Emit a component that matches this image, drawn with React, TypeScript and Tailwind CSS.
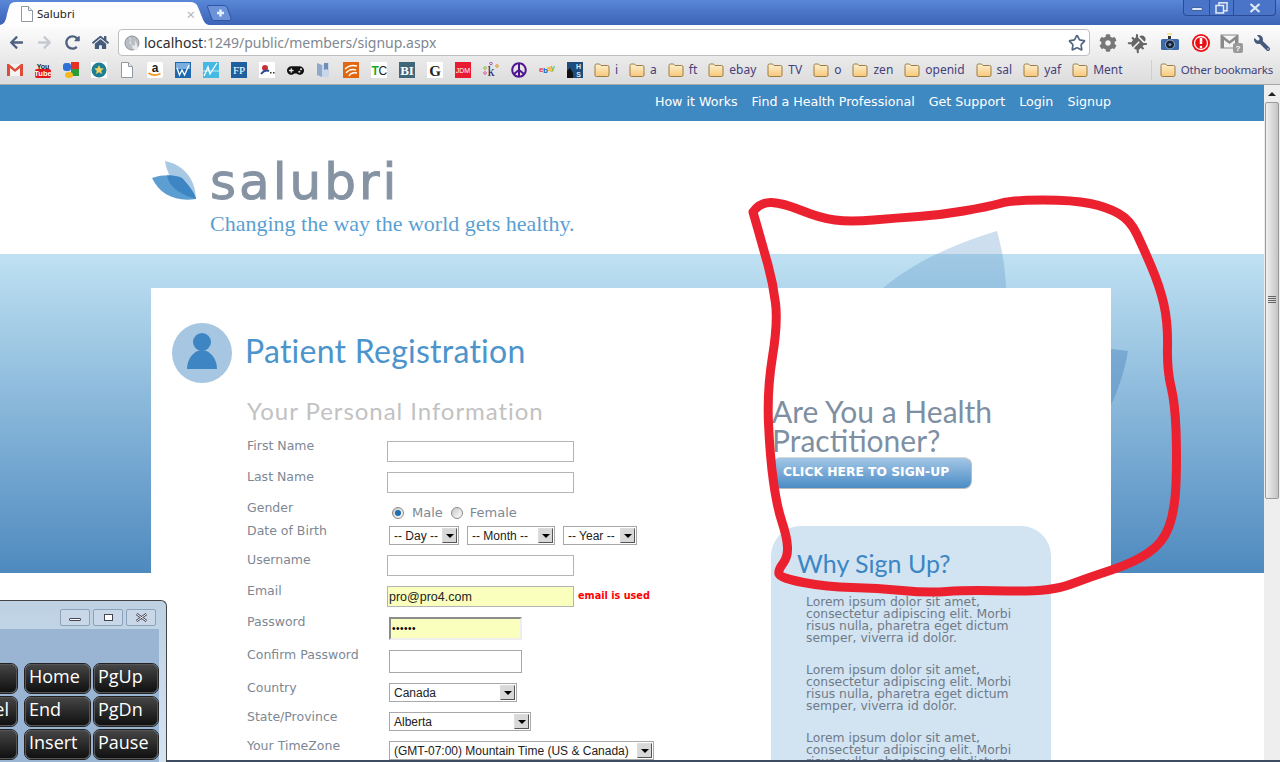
import React from "react";
import { Star } from "lucide-react";
import {
  FaArrowLeft,
  FaArrowRight,
  FaRedoAlt,
  FaHome,
  FaCog,
  FaBug,
  FaWrench,
  FaGamepad,
  FaPeace,
} from "react-icons/fa";

const sans = "font-['DejaVu_Sans',sans-serif]";
const heading = "font-['Lato',sans-serif]";
const ui = "font-['Liberation_Sans',sans-serif]";

function DocIcon() {
  return (
    <svg width="16" height="16" viewBox="0 0 16 16" className="shrink-0">
      <path d="M2.5 .5h7l4 4v11h-11z" fill="#fff" stroke="#8f98a3" />
      <path d="M9.5 .5v4h4" fill="#e8ecf0" stroke="#8f98a3" />
    </svg>
  );
}

function FolderIcon() {
  return (
    <svg width="16" height="16" viewBox="0 0 16 16" className="shrink-0">
      <defs>
        <linearGradient id="folderFill" x1="0" y1="0" x2="0" y2="1">
          <stop offset="0" stopColor="#fdf1cf" />
          <stop offset="1" stopColor="#f6c77a" />
        </linearGradient>
      </defs>
      <path
        d="M1 3.5Q1 2 2.5 2h3L7 3.5h6.5Q15 3.5 15 5v8q0 1.5-1.5 1.5h-11Q1 14.5 1 13z"
        fill="url(#folderFill)"
        stroke="#9b7d45"
      />
    </svg>
  );
}

const favicons: React.ReactNode[] = [
  <svg key="gmail" width="16" height="16" viewBox="0 0 16 16">
    <rect y="2" width="16" height="12" fill="#f4f4f4" />
    <path d="M0 2v12h3V6l5 4 5-4v8h3V2h-2L8 7 2 2z" fill="#dd4b39" />
  </svg>,
  <svg key="yt" width="16" height="16" viewBox="0 0 16 16">
    <text x="8" y="6.5" textAnchor="middle" fontSize="7" fontWeight="700" fontFamily="Liberation Sans" fill="#222">You</text>
    <rect y="7" width="16" height="9" rx="2" fill="#e3161b" />
    <text x="8" y="14" textAnchor="middle" fontSize="7.5" fontWeight="700" fontFamily="Liberation Sans" fill="#fff">Tube</text>
  </svg>,
  <svg key="google" width="16" height="16" viewBox="0 0 16 16">
    <rect x="8" width="8" height="7" fill="#e53125" />
    <rect y="1" width="8" height="8" rx="3" fill="#2f6fd8" />
    <rect x="8" y="7" width="8" height="7" fill="#2c9b3c" />
    <ellipse cx="6" cy="13" rx="4" ry="3" fill="#f5b818" />
  </svg>,
  <svg key="star" width="16" height="16" viewBox="0 0 16 16">
    <rect width="16" height="16" fill="#fff" />
    <circle cx="8" cy="8" r="7.5" fill="#1d7f95" />
    <path d="M8 3l1.4 3.2 3.4.3-2.6 2.2.8 3.3L8 10.3 5 12l.8-3.3-2.6-2.2 3.4-.3z" fill="#f4d65a" />
  </svg>,
  <DocIcon key="doc" />,
  <svg key="amazon" width="16" height="16" viewBox="0 0 16 16">
    <rect width="16" height="16" rx="2" fill="#fff" />
    <text x="8" y="9.5" textAnchor="middle" fontSize="12" fontWeight="700" fontFamily="Liberation Sans" fill="#222">a</text>
    <path d="M1.5 11q6 4 12 .5" fill="none" stroke="#f0971d" strokeWidth="1.6" />
  </svg>,
  <svg key="w1" width="16" height="16" viewBox="0 0 16 16">
    <rect width="16" height="16" fill="#1f68ad" />
    <rect x="1" y="1" width="14" height="6" fill="#79aede" />
    <path d="M2 6l2.5 7L7 8l2.5 5L14 3" fill="none" stroke="#fff" strokeWidth="1.3" />
  </svg>,
  <svg key="w2" width="16" height="16" viewBox="0 0 16 16">
    <rect width="16" height="16" fill="#45b9e2" />
    <path d="M0 9h16" stroke="#c9eefa" />
    <path d="M1 14L5 5l2 7 7-11" fill="none" stroke="#fff" strokeWidth="1.3" />
  </svg>,
  <svg key="fp" width="16" height="16" viewBox="0 0 16 16">
    <rect width="16" height="16" fill="#1d5f9f" />
    <text x="8" y="12" textAnchor="middle" fontSize="11" fontFamily="Liberation Serif" fill="#fff">FP</text>
  </svg>,
  <svg key="hurricane" width="16" height="16" viewBox="0 0 16 16">
    <rect width="16" height="16" fill="#fff" />
    <circle cx="6" cy="6" r="3" fill="#c8303a" />
    <path d="M2 12q4-5 8-3" fill="none" stroke="#2c4c8f" strokeWidth="2" />
    <rect x="11" y="10" width="1.5" height="1.5" fill="#333" />
    <rect x="14" y="10" width="1.5" height="1.5" fill="#333" />
  </svg>,
  <FaGamepad key="pad" size={17} color="#111" />,
  <svg key="sheet" width="16" height="16" viewBox="0 0 16 16">
    <path d="M2 1l5 2v12l-5-2z" fill="#8fa9cc" />
    <path d="M7 3l7-2v14l-7 0z" fill="#c8d6e8" />
    <path d="M9 1h4v7l-2-1-2 1z" fill="#6f8db8" />
  </svg>,
  <svg key="orange" width="16" height="16" viewBox="0 0 16 16">
    <rect width="16" height="16" fill="#e0660f" />
    <path d="M2 7q5-5 12-3M3 11q4-5 10-3M6 14q2-4 8-3" fill="none" stroke="#fff" strokeWidth="1.4" />
  </svg>,
  <svg key="tc" width="16" height="16" viewBox="0 0 16 16">
    <rect width="16" height="16" fill="#fff" />
    <text x="0.5" y="13" fontSize="12" fontWeight="700" fontFamily="Liberation Sans" fill="#12ab1c">T</text>
    <text x="7.5" y="13" fontSize="12" fontFamily="Liberation Sans" fill="#222">C</text>
  </svg>,
  <svg key="bi" width="16" height="16" viewBox="0 0 16 16">
    <rect width="16" height="16" fill="#3f6778" />
    <text x="8" y="13" textAnchor="middle" fontSize="13" fontWeight="700" fontFamily="Liberation Serif" fill="#fff">BI</text>
  </svg>,
  <svg key="g" width="16" height="16" viewBox="0 0 16 16">
    <rect width="16" height="16" fill="#fff" />
    <text x="8" y="13.5" textAnchor="middle" fontSize="15" fontWeight="700" fontFamily="Liberation Serif" fill="#222">G</text>
  </svg>,
  <svg key="jdm" width="16" height="16" viewBox="0 0 16 16">
    <rect width="16" height="16" fill="#e81b30" />
    <text x="8" y="11" textAnchor="middle" fontSize="7" fontFamily="Liberation Sans" fill="#fff">JDM</text>
  </svg>,
  <svg key="k" width="16" height="16" viewBox="0 0 16 16">
    <text x="8" y="14" textAnchor="middle" fontSize="14" fontFamily="Liberation Serif" fill="#1a1f7a">k</text>
    <circle cx="2" cy="6" r="1.3" fill="none" stroke="#8ac14a" />
    <circle cx="8" cy="1.5" r="1.3" fill="none" stroke="#a64cc4" />
    <circle cx="14" cy="4" r="1.3" fill="none" stroke="#e0962a" />
    <circle cx="2" cy="11" r="1.3" fill="none" stroke="#d85b9a" />
  </svg>,
  <FaPeace key="peace" size={16} color="#4f1590" />,
  <svg key="ebay" width="16" height="16" viewBox="0 0 16 16">
    <text x="0" y="10" fontSize="8" fontWeight="700" fontFamily="Liberation Sans" fill="#e53238">e</text>
    <text x="4" y="11" fontSize="8" fontWeight="700" fontFamily="Liberation Sans" fill="#0064d2">b</text>
    <text x="8" y="9" fontSize="8" fontWeight="700" fontFamily="Liberation Sans" fill="#f5af02">a</text>
    <text x="11.5" y="8" fontSize="8" fontWeight="700" fontFamily="Liberation Sans" fill="#86b817">y</text>
  </svg>,
  <svg key="hs" width="16" height="16" viewBox="0 0 16 16">
    <rect width="16" height="16" fill="#1d4d7a" />
    <path d="M0 16V9l3-3 3 5v5z" fill="#111" />
    <text x="11.5" y="7" textAnchor="middle" fontSize="7" fontWeight="700" fontFamily="Liberation Sans" fill="#dce8f2">H</text>
    <text x="11.5" y="14.5" textAnchor="middle" fontSize="7" fontWeight="700" fontFamily="Liberation Sans" fill="#dce8f2">S</text>
  </svg>,
];

const folders = ["i", "a", "ft", "ebay", "TV", "o", "zen", "openid", "sal", "yaf", "Ment"];

function Bookmark({ label, size = "text-[12px]" }: { label: string; size?: string }) {
  return (
    <div className="flex items-center gap-[5px]">
      <FolderIcon />
      <span className={`${size} text-[#44407a]`}>{label}</span>
    </div>
  );
}

function Chrome() {
  return (
    <div className="shrink-0 font-['Noto_Sans',sans-serif]">
      {/* tab strip */}
      <div className="flex h-[25px] bg-gradient-to-b from-[#5a87d8] to-[#3b63b6]">
        <div className="relative flex h-[25px] w-[207px] items-center pl-[19px] pt-[3px]">
          <svg className="absolute left-0 top-0" width="211" height="25" viewBox="0 0 211 25">
            <path d="M0 25Q6 24 7 14L9 7Q10 2 16 2H190Q196 2 198 7L202 17Q204 24 209 25Z" fill="#fefefe" />
          </svg>
          <div className="relative flex w-full items-center">
            <DocIcon />
            <span className="ml-[2px] text-[11.5px] text-[#222]">Salubri</span>
            <span className="ml-auto mr-[12px] text-[15px] leading-none text-[#b5b5b5]">×</span>
          </div>
        </div>
        <div className="mt-[5px]">
          <svg width="26" height="16" viewBox="0 0 26 16">
            <path d="M1 .5H17Q19 .5 20 2L24 13Q25 15.5 22 15.5H7Q5 15.5 4.500 13L.5 2Q.5 .5 1 .5Z" fill="#6c92d8" stroke="#2f55a5" />
            <path d="M10 8h7M13.500 4.500v7" stroke="#e6eefb" strokeWidth="2.500" />
          </svg>
        </div>
        <div className="ml-auto mr-[4px] flex h-[16px] w-[93px] rounded-b-[4px] border border-t-0 border-[#2a4c98] bg-[#4a74c8]">
          <div className="flex w-[26px] items-center justify-center border-r border-[#2a4c98]">
            <div className="mt-[2px] h-[4px] w-[12px] rounded-[2px] border border-[#3f5f9f] bg-[#dfe8f6]" />
          </div>
          <div className="flex w-[24px] items-center justify-center border-r border-[#2a4c98]">
            <svg width="13" height="12" viewBox="0 0 13 12">
              <rect x="4" y=".8" width="8" height="8" fill="none" stroke="#e4ecf9" strokeWidth="1.500" />
              <rect x="1" y="3.500" width="7.500" height="7.500" fill="#4a74c8" stroke="#e4ecf9" strokeWidth="1.500" />
            </svg>
          </div>
          <div className="flex flex-1 items-center justify-center">
            <svg width="12" height="10" viewBox="0 0 12 10">
              <path d="M1.500 1l9 8M10.500 1l-9 8" stroke="#dfe8f6" strokeWidth="2.200" />
            </svg>
          </div>
        </div>
      </div>

      {/* toolbar and bookmarks */}
      <div className="h-[60px] border-b border-[#a8a8a8] bg-gradient-to-b from-[#fdfdfd] via-[#ececec] to-[#dcdcdc]">
        <div className="flex h-[33px] items-start pl-[2px] pt-[4px]">
          <div className="flex h-[27px] w-[28px] items-center justify-center text-[#4f6180]"><FaArrowLeft size={15} /></div>
          <div className="flex h-[27px] w-[28px] items-center justify-center text-[#c5cad2]"><FaArrowRight size={15} /></div>
          <div className="flex h-[27px] w-[28px] items-center justify-center text-[#4f6180]"><FaRedoAlt size={15} /></div>
          <div className="flex h-[27px] w-[28px] items-center justify-center text-[#45597a]"><FaHome size={17} /></div>
          <div className="ml-[4px] flex h-[27px] w-[972px] items-center rounded-[4px] border border-[#bfbfbf] bg-white pl-[5px] pr-[3px]">
            <svg width="16" height="16" viewBox="0 0 16 16">
              <circle cx="8" cy="8" r="7" fill="#b9bec4" stroke="#8d9298" />
              <path d="M5 2q3 2 1 4T8 10t3-3 2 3-4 4" fill="#e8eaec" />
            </svg>
            <span className="ml-[4px] text-[14px] text-[#7f8790]">
              <span className="text-[#2c2c2c]">localhost</span>:1249/public/members/signup.aspx
            </span>
            <Star className="ml-auto" size={18} strokeWidth={2.2} color="#50637f" fill="#fff" />
          </div>
          <div className="ml-[2px] flex">
            <div className="flex h-[27px] w-[31px] items-center justify-center text-[#777]"><FaCog size={18} /></div>
            <div className="flex h-[27px] w-[31px] items-center justify-center text-[#666]"><FaBug size={17} className="rotate-45" /></div>
            <div className="flex h-[27px] w-[31px] items-center justify-center">
              <svg width="20" height="20" viewBox="0 0 20 20">
                <path d="M7 1h5" stroke="#f3e58a" strokeWidth="2" />
                <rect x="8" y="3" width="3" height="3" fill="#333" />
                <rect x="1" y="6" width="18" height="11" rx="1.500" fill="#3c6aa8" />
                <circle cx="10" cy="11.500" r="4.500" fill="#1a2230" stroke="#9db6d8" />
                <circle cx="10" cy="11.500" r="1.500" fill="#6d8fb8" />
              </svg>
            </div>
            <div className="flex h-[27px] w-[31px] items-center justify-center">
              <svg width="20" height="20" viewBox="0 0 20 20">
                <circle cx="10" cy="10" r="9" fill="#ea0f14" />
                <circle cx="10" cy="10" r="6.500" fill="none" stroke="#fff" strokeWidth="1.300" />
                <path d="M10 5v6" stroke="#fff" strokeWidth="2.500" />
                <circle cx="10" cy="14" r="1.300" fill="#fff" />
              </svg>
            </div>
            <div className="flex h-[27px] w-[31px] items-center justify-center">
              <svg width="24" height="22" viewBox="0 0 24 22">
                <rect x="1" y="3" width="17" height="13" fill="#f4f4f4" stroke="#8a8a8a" />
                <path d="M1 3v13h3V8l5.500 4L15 8v8h3V3h-1L9.500 9 2 3z" fill="#8a8a8a" />
                <rect x="13" y="11" width="10" height="10" rx="2" fill="#9a9a9a" />
                <text x="18" y="19" textAnchor="middle" fontSize="8" fontWeight="700" fontFamily="Liberation Sans" fill="#fff">?</text>
              </svg>
            </div>
            <div className="flex h-[27px] w-[30px] items-center justify-center text-[#46597a]"><FaWrench size={16} className="-scale-x-100" /></div>
          </div>
        </div>
        <div className="flex h-[24px] items-center pl-[1px] pr-[7px]">
          {favicons.map((icon, i) => (
            <div key={i} className="flex w-[28px] justify-center">{icon}</div>
          ))}
          <div className="ml-[5px] flex gap-[11px]">
            {folders.map((f) => <Bookmark key={f} label={f} />)}
          </div>
          <div className="ml-auto flex items-center">
            <div className="mr-[8px] h-[20px] w-px bg-[#cfcfcf]" />
            <Bookmark label="Other bookmarks" size="text-[11.5px] tracking-[-0.2px]" />
          </div>
        </div>
      </div>
    </div>
  );
}

function TextInput({ w, value, bg }: { w: string; value?: string; bg?: string }) {
  return (
    <input
      readOnly
      value={value ?? ""}
      className={`${w} ${bg ?? "bg-white"} ${ui} block h-[21px] border border-[#b4b4b4] px-[1px] text-[12.5px] text-[#222] outline-none`}
    />
  );
}

function SelectBox({ w, value }: { w: string; value: string }) {
  return (
    <div className={`${w} ${ui} flex h-[19px] items-center border border-[#a9a9a9] bg-white`}>
      <span className="flex-1 whitespace-nowrap pl-[4px] text-[12px] text-[#222]">{value}</span>
      <div className="m-px flex h-[15px] w-[15px] items-center justify-center border border-[#555] border-l-[#ddd] border-t-[#ddd] bg-[#d8d8d8]">
        <div className="h-0 w-0 border-x-[4px] border-t-[4px] border-x-transparent border-t-black" />
      </div>
    </div>
  );
}

function Radio({ checked }: { checked?: boolean }) {
  return (
    <span className="flex h-[12px] w-[12px] items-center justify-center rounded-full border border-[#8a8a8a] bg-gradient-to-br from-[#c8c8c8] to-white">
      {checked && <span className="h-[6px] w-[6px] rounded-full bg-[#1c6fb0]" />}
    </span>
  );
}

function FormRow({ label, h, children }: { label: string; h: string; children: React.ReactNode }) {
  return (
    <div className={`${h} flex`}>
      <div className="w-[140px] text-[12.5px] leading-[18px] text-[#7d8894]">{label}</div>
      <div className="pt-[4px]">{children}</div>
    </div>
  );
}

function PersonalForm() {
  return (
    <div className={`${sans} mt-[12px]`}>
      <FormRow label="First Name" h="h-[31px]"><TextInput w="w-[187px]" /></FormRow>
      <FormRow label="Last Name" h="h-[31px]"><TextInput w="w-[187px]" /></FormRow>
      <FormRow label="Gender" h="h-[23px]">
        <div className="ml-[5px] mt-[2px] flex h-[16px] items-center text-[13px] text-[#7d8894]">
          <Radio checked />
          <span className="ml-[8px]">Male</span>
          <span className="ml-[8px]"><Radio /></span>
          <span className="ml-[7px]">Female</span>
        </div>
      </FormRow>
      <FormRow label="Date of Birth" h="h-[29px]">
        <div className="ml-[2px] flex gap-[8px]">
          <SelectBox w="w-[70px]" value="-- Day --" />
          <SelectBox w="w-[88px]" value="-- Month --" />
          <SelectBox w="w-[74px]" value="-- Year --" />
        </div>
      </FormRow>
      <FormRow label="Username" h="h-[31px]"><TextInput w="w-[187px]" /></FormRow>
      <FormRow label="Email" h="h-[31px]">
        <div className="flex items-center">
          <TextInput w="w-[187px]" value="pro@pro4.com" bg="bg-[#fbffbd]" />
          <span className="ml-[4px] text-[9.7px] font-bold text-[#f00]">email is used</span>
        </div>
      </FormRow>
      <FormRow label="Password" h="h-[33px]">
        <div className={`${ui} ml-[2px] flex h-[23px] w-[133px] items-center border-2 border-[#8c8c8c] border-b-[#eee] border-r-[#eee] bg-[#fbffbd] pl-[1px] text-[10px] tracking-[0.5px] text-black`}>
          ••••••
        </div>
      </FormRow>
      <FormRow label="Confirm Password" h="h-[33px]">
        <div className="ml-[2px] h-[23px] w-[133px] border border-[#a8a8a8] bg-white" />
      </FormRow>
      <FormRow label="Country" h="h-[29px]"><div className="ml-[2px]"><SelectBox w="w-[128px]" value="Canada" /></div></FormRow>
      <FormRow label="State/Province" h="h-[29px]"><div className="ml-[2px]"><SelectBox w="w-[142px]" value="Alberta" /></div></FormRow>
      <FormRow label="Your TimeZone" h="h-[29px]">
        <div className="ml-[2px]"><SelectBox w="w-[265px]" value="(GMT-07:00) Mountain Time (US & Canada)" /></div>
      </FormRow>
    </div>
  );
}

const lorem = "Lorem ipsum dolor sit amet, consectetur adipiscing elit. Morbi risus nulla, pharetra eget dictum semper, viverra id dolor.";

function Card() {
  return (
    <div className="relative z-10 mx-[151px] flex w-[960px] bg-white">
      <div className="w-[620px] shrink-0 pl-[21px] pt-[35px]">
        <div className="flex items-center">
          <svg width="60" height="60" viewBox="0 0 60 60">
            <circle cx="30" cy="30" r="30" fill="#a6c6e2" />
            <circle cx="30" cy="19" r="9" fill="#3d85c3" />
            <path d="M15 46C15 36 22 27 30 27S45 36 45 46Z" fill="#3d85c3" />
          </svg>
          <h1 className={`${heading} mb-[4px] ml-[13px] text-[32px] tracking-[0.25px] text-[#4b94cc]`}>Patient Registration</h1>
        </div>
        <div className="ml-[75px]">
          <h2 className={`${heading} mt-[14px] h-[28px] text-[24px] leading-[28px] tracking-[0.95px] text-[#c2c2c2]`}>Your Personal Information</h2>
          <PersonalForm />
        </div>
      </div>
      <div className="flex-1 pt-[109px]">
        <h2 className={`${heading} ml-[1px] w-[240px] text-[30px] leading-[29px] text-[#7e8fa3]`}>Are You a Health Practitioner?</h2>
        <div className={`${sans} ml-[1px] mt-[2px] flex h-[32px] w-[200px] items-center rounded-[8px] border border-[#d8d8d8] border-b-[#bbb] border-r-[#bbb] bg-gradient-to-b from-[#a3c6e5] to-[#4a8cc5] pb-[2px] pl-[10px] text-[12.3px] font-bold text-white`}>
          CLICK HERE TO SIGN-UP
        </div>
        <div className="mt-[37px] w-[280px] rounded-t-[30px] bg-[#d2e3f2] pl-[35px] pr-[30px] pt-[20px]">
          <h3 className={`${heading} -ml-[9px] text-[25px] leading-[34px] text-[#3b87c4]`}>Why Sign Up?</h3>
          <div className={`${sans} mt-[16px] flex flex-col gap-[20px] text-[12.35px] leading-[12px] text-[#6f7b89]`}>
            <p>{lorem}</p>
            <p>{lorem}</p>
            <p>{lorem}</p>
          </div>
        </div>
      </div>
    </div>
  );
}

function Page() {
  return (
    <div className="relative min-h-0 flex-1 overflow-hidden bg-white">
      <div className={`${sans} flex h-[36px] items-center justify-end gap-[14px] bg-[#3f89c2] pb-[2px] pr-[169px] text-[12.65px] text-white`}>
        <span>How it Works</span>
        <span>Find a Health Professional</span>
        <span>Get Support</span>
        <span>Login</span>
        <span>Signup</span>
      </div>
      <div className="h-[133px] pl-[152px] pt-[40px]">
        <div className="flex items-start">
          <svg width="46" height="40" viewBox="0 0 46 40">
            <path d="M13 0C28 3 43 14 44 38C30 33 16 20 13 0Z" fill="#a8c9e4" />
            <path d="M0 17C12 13 24 14 30 17C36 24 42 30 44 38C24 41 8 34 0 17Z" fill="#5c9dd2" />
            <path d="M15 14.500C17 24 24 32 44 38C42 30 36 24 30 17C25 15 20 14.500 15 14.500Z" fill="#3d85c3" />
          </svg>
          <div className="-mt-[8px] ml-[12px]">
            <div className={`${sans} text-[50px] leading-[58px] tracking-[3px] text-[#8593a3] [-webkit-text-stroke:1px_#8593a3]`}>salubri</div>
            <div className="mt-[1px] font-['Liberation_Serif',serif] text-[22px] leading-[24px] text-[#5a9fd2]">Changing the way the world gets healthy.</div>
          </div>
        </div>
      </div>
      <div className="h-[319px] bg-gradient-to-b from-[#bfe1f2] to-[#4e8abf] pt-[34px]">
        <Card />
      </div>
      {/* leaf artwork behind the card */}
      <svg className="absolute left-0 top-0" width="1264" height="677" viewBox="0 85 1264 677">
        <path d="M997 231C950 245 910 265 883 288H1006C1005 265 1002 250 997 231Z" fill="#5b93c7" fillOpacity="0.3" />
        <path d="M1111 349L1128 351C1125 370 1118 390 1111 405Z" fill="#4f88bf" fillOpacity="0.45" />
      </svg>
    </div>
  );
}

function Scrollbar() {
  return (
    <div className="absolute bottom-[2px] right-0 top-[85px] flex w-[16px] flex-col bg-[#eeeeee]">
      <div className="flex h-[17px] items-center justify-center">
        <div className="h-0 w-0 border-x-[4px] border-b-[4px] border-x-transparent border-b-[#222]" />
      </div>
      <div className="mx-px flex h-[397px] items-center justify-center rounded-[2px] border border-[#9a9a9a] bg-gradient-to-r from-[#f0f0f0] to-[#c4c4c4]">
        <div className="mt-[-3px] flex flex-col gap-[1px]">
          <div className="h-px w-[8px] bg-[#666]" />
          <div className="h-px w-[8px] bg-[#666]" />
          <div className="h-px w-[8px] bg-[#666]" />
          <div className="h-px w-[8px] bg-[#666]" />
        </div>
      </div>
    </div>
  );
}

function Key({ label, w, right }: { label?: string; w: string; right?: boolean }) {
  return (
    <div className={`${w} ${right ? "justify-end pr-[7px]" : "pl-[3px]"} flex h-[29px] shrink-0 items-center rounded-[6px] border border-[#555] bg-gradient-to-b from-[#454545] to-[#111] pb-[6px] text-[18px] leading-none text-white outline-1 outline-[#222]`}>
      {label}
    </div>
  );
}

function KeyboardWindow() {
  const rows = [
    ["", "Home", "PgUp"],
    ["Del", "End", "PgDn"],
    ["", "Insert", "Pause"],
  ];
  return (
    <div className="absolute bottom-0 left-0 z-30 h-[162px] w-[167px] overflow-hidden rounded-tr-[6px] border-r border-t border-[#444] bg-gradient-to-b from-[#bdd1e3] to-[#d4e4f3] font-['Open_Sans',sans-serif]">
      <div className="flex h-[28px] justify-end gap-[3px] pr-[10px] pt-[8px]">
        <div className="flex h-[17px] w-[30px] items-center justify-center rounded-[2px] border border-[#8da2b8] bg-[#c8d8e8]">
          <div className="mt-[3px] h-[3px] w-[12px] rounded-[1px] border border-[#445] bg-white" />
        </div>
        <div className="flex h-[17px] w-[30px] items-center justify-center rounded-[2px] border border-[#8da2b8] bg-[#c8d8e8]">
          <div className="h-[7px] w-[9px] border border-[#445] bg-white" />
        </div>
        <div className="flex h-[17px] w-[30px] items-center justify-center rounded-[2px] border border-[#8da2b8] bg-[#c8d8e8]">
          <svg width="13" height="9" viewBox="0 0 13 9">
            <path d="M1.500 1l10 7M11.500 1l-10 7" stroke="#445" strokeWidth="2.500" />
            <path d="M1.500 1l10 7M11.500 1l-10 7" stroke="#fff" strokeWidth="1" />
          </svg>
        </div>
      </div>
      <div className="h-full w-[159px] overflow-hidden bg-[#9ab5d3] pt-[35px]">
        <div className="flex flex-col gap-[4px]">
          {rows.map((r, i) => (
            <div key={i} className="-ml-[48px] flex">
              <Key w="w-[65px]" label={r[0]} right />
              <div className="ml-[8px]"><Key w="w-[65px]" label={r[1]} /></div>
              <div className="ml-[4px]"><Key w="w-[64px]" label={r[2]} /></div>
            </div>
          ))}
        </div>
      </div>
    </div>
  );
}

const scribble: [number, number][] = [
  [753, 212], [760, 202], [783, 203], [820, 218], [850, 222], [897, 218], [940, 215], [987, 207], [1013, 200],
  [1073, 200], [1107, 207], [1130, 220], [1143, 247], [1160, 287], [1168, 323], [1167, 370], [1175, 403],
  [1177, 457], [1175, 510], [1163, 543], [1133, 563], [1090, 577], [1050, 592], [967, 590], [927, 593],
  [877, 588], [827, 587], [780, 578], [778, 570], [788, 557], [787, 537], [777, 507], [770, 457], [767, 390],
  [778, 323], [773, 283], [763, 247], [753, 212],
];

function smoothPath(pts: [number, number][]) {
  let d = `M${pts[0][0]} ${pts[0][1]}`;
  for (let i = 1; i < pts.length - 1; i++) {
    const mx = (pts[i][0] + pts[i + 1][0]) / 2;
    const my = (pts[i][1] + pts[i + 1][1]) / 2;
    d += `Q${pts[i][0]} ${pts[i][1]} ${mx} ${my}`;
  }
  const last = pts[pts.length - 1];
  return `${d}L${last[0]} ${last[1]}`;
}

export default function App() {
  return (
    <div className={`${ui} relative flex h-[762px] w-[1280px] flex-col overflow-hidden bg-white`}>
      <Chrome />
      <Page />
      <div className="h-[2px] shrink-0 bg-[#3d4c60]" />
      <Scrollbar />
      <KeyboardWindow />
      {/* red marker scribble drawn over the screenshot */}
      <svg className="pointer-events-none absolute left-0 top-0 z-20 blur-[0.7px]" width="1280" height="762" viewBox="0 0 1280 762">
        <path d={smoothPath(scribble)} fill="none" stroke="#ec2130" strokeWidth="9" strokeLinecap="round" strokeLinejoin="round" />
      </svg>
    </div>
  );
}
